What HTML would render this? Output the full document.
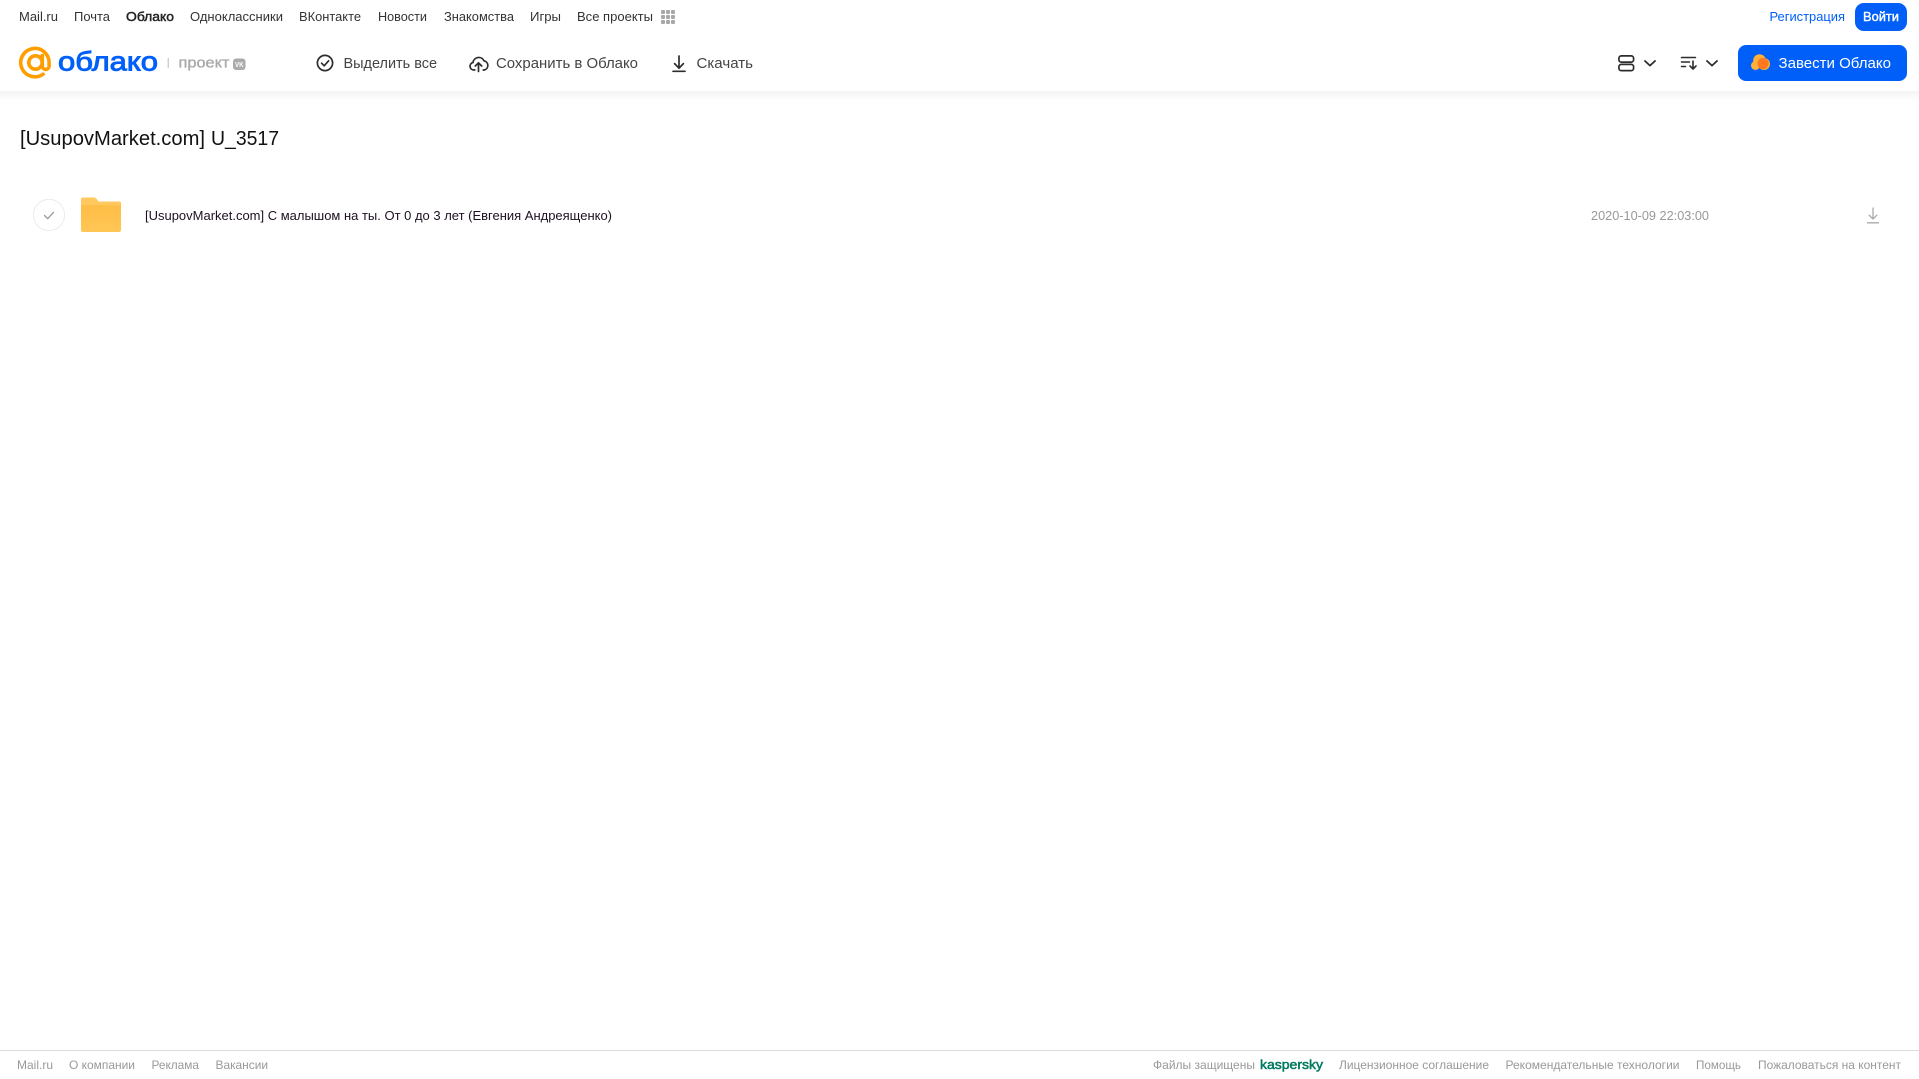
<!DOCTYPE html>
<html lang="ru">
<head>
<meta charset="utf-8">
<title>[UsupovMarket.com] U_3517</title>
<style>
html,body{margin:0;padding:0;background:#fff;width:1919px;height:1079px;overflow:hidden}
svg{display:block}
text{font-family:"Liberation Sans",Arial,sans-serif}
.nav{font-size:13px;fill:#333}
.tb{font-size:15px;fill:#444}
.ft{font-size:12px;fill:#999}
</style>
</head>
<body>
<svg width="1919" height="1079" viewBox="0 0 1919 1079" xmlns="http://www.w3.org/2000/svg">
<defs>
<linearGradient id="sh" x1="0" y1="0" x2="0" y2="1"><stop offset="0" stop-color="#f4f4f4"/><stop offset="1" stop-color="#fff"/></linearGradient>
<linearGradient id="fd" x1="0" y1="0" x2="0" y2="1"><stop offset="0" stop-color="#ffbb42"/><stop offset="1" stop-color="#ffc655"/></linearGradient>
</defs>
<rect x="0" y="91" width="1919" height="11" fill="url(#sh)"/>

<!-- top nav -->
<text class="nav" x="19" y="21" textLength="39" lengthAdjust="spacingAndGlyphs">Mail.ru</text>
<text class="nav" x="74" y="21" textLength="36" lengthAdjust="spacingAndGlyphs">Почта</text>
<text class="nav" x="126" y="21" textLength="48" lengthAdjust="spacingAndGlyphs" stroke="#222" stroke-width=".45" style="fill:#222">Облако</text>
<text class="nav" x="190" y="21" textLength="93" lengthAdjust="spacingAndGlyphs">Одноклассники</text>
<text class="nav" x="299" y="21" textLength="62" lengthAdjust="spacingAndGlyphs">ВКонтакте</text>
<text class="nav" x="378" y="21" textLength="49" lengthAdjust="spacingAndGlyphs">Новости</text>
<text class="nav" x="444" y="21" textLength="70" lengthAdjust="spacingAndGlyphs">Знакомства</text>
<text class="nav" x="530" y="21" textLength="31" lengthAdjust="spacingAndGlyphs">Игры</text>
<text class="nav" x="577" y="21" textLength="76" lengthAdjust="spacingAndGlyphs">Все проекты</text>
<g fill="#a8a8a8">
<rect x="661" y="10" width="4" height="4" rx="1"/><rect x="666" y="10" width="4" height="4" rx="1"/><rect x="671" y="10" width="4" height="4" rx="1"/>
<rect x="661" y="15" width="4" height="4" rx="1"/><rect x="666" y="15" width="4" height="4" rx="1"/><rect x="671" y="15" width="4" height="4" rx="1"/>
<rect x="661" y="20" width="4" height="4" rx="1"/><rect x="666" y="20" width="4" height="4" rx="1"/><rect x="671" y="20" width="4" height="4" rx="1"/>
</g>
<text class="nav" x="1769.500" y="21" textLength="75.500" lengthAdjust="spacingAndGlyphs" style="fill:#005ff9">Регистрация</text>
<rect x="1855" y="3" width="52" height="28" rx="9" fill="#005ff9"/>
<text x="1863" y="21" font-size="13" fill="#fff" stroke="#fff" stroke-width=".4" textLength="36" lengthAdjust="spacingAndGlyphs">Войти</text>

<!-- logo -->
<path d="M42.300 55.500V66a3.400 3.400 0 0 0 6.800 0V62.500a14.200 14.200 0 1 0-6 11.700" fill="none" stroke="#ff9e00" stroke-width="3.600" stroke-linecap="round"/>
<circle cx="35.500" cy="62.500" r="6.700" fill="none" stroke="#ff9e00" stroke-width="3.600"/>
<text x="58" y="70.500" font-size="27" fill="#005ff9" stroke="#005ff9" stroke-width=".9" textLength="100" lengthAdjust="spacingAndGlyphs">облако</text>
<rect x="167.700" y="58" width="1" height="10" fill="#b8b8b8"/>
<text x="178.500" y="67.500" font-size="15" fill="#a9a9a9" stroke="#a9a9a9" stroke-width=".35" textLength="51" lengthAdjust="spacingAndGlyphs">проект</text>
<rect x="233" y="58.500" width="12.500" height="11.500" rx="3" fill="#ababab"/>
<text x="235" y="67" font-size="7" font-weight="700" fill="#fff" textLength="8.500" lengthAdjust="spacingAndGlyphs">VK</text>

<!-- toolbar -->
<circle cx="325" cy="63" r="7.600" fill="none" stroke="#2c2d2e" stroke-width="1.700"/>
<path d="M321.600 63.200l2.600 2.600 4.400-5" fill="none" stroke="#2c2d2e" stroke-width="1.700" stroke-linecap="round" stroke-linejoin="round"/>
<text class="tb" x="343.500" y="68" textLength="93.500" lengthAdjust="spacingAndGlyphs">Выделить все</text>

<path d="M474.800 70h-1a3.800 3.800 0 0 1-.8-7.500 5.800 5.800 0 0 1 11-1.700 4.700 4.700 0 0 1 .2 9.200h-1" fill="none" stroke="#2c2d2e" stroke-width="1.700" stroke-linecap="round" stroke-linejoin="round"/>
<path d="M478.500 71.500v-8M475.300 66l3.200-3.200 3.200 3.200" fill="none" stroke="#2c2d2e" stroke-width="1.700" stroke-linecap="round" stroke-linejoin="round"/>
<text class="tb" x="496" y="68" textLength="142" lengthAdjust="spacingAndGlyphs">Сохранить в Облако</text>

<path d="M679 56v12M674.600 63.600l4.400 4.600 4.400-4.600M673 71.300h12" fill="none" stroke="#2c2d2e" stroke-width="1.700" stroke-linecap="round" stroke-linejoin="round"/>
<text class="tb" x="696.500" y="68" textLength="56.500" lengthAdjust="spacingAndGlyphs">Скачать</text>

<!-- right header -->
<rect x="1618.900" y="55.900" width="14.700" height="6.200" rx="2.400" fill="none" stroke="#2c2d2e" stroke-width="1.700"/>
<rect x="1618.900" y="64.400" width="14.700" height="6.200" rx="2.400" fill="none" stroke="#2c2d2e" stroke-width="1.700"/>
<path d="M1645 61l5 4.600 5-4.600" fill="none" stroke="#2c2d2e" stroke-width="1.800" stroke-linecap="round" stroke-linejoin="round"/>
<path d="M1681.500 57.500h14M1681.500 62h8M1681.500 66.500h4" fill="none" stroke="#2c2d2e" stroke-width="1.500" stroke-linecap="round"/>
<path d="M1693 61v8M1690 66l3 3 3-3" fill="none" stroke="#2c2d2e" stroke-width="1.600" stroke-linecap="round" stroke-linejoin="round"/>
<path d="M1707 61l5 4.600 5-4.600" fill="none" stroke="#2c2d2e" stroke-width="1.800" stroke-linecap="round" stroke-linejoin="round"/>

<rect x="1738" y="45" width="169" height="36" rx="8" fill="#005ff9"/>
<g fill="#ffb03a"><circle cx="1759.500" cy="60.500" r="6.300"/><circle cx="1755.500" cy="65.500" r="4.500"/><circle cx="1764" cy="64" r="6"/></g>
<circle cx="1763" cy="63.500" r="5.600" fill="#ff7a1f"/>
<text x="1778.500" y="68" font-size="15" fill="#fff" textLength="112.500" lengthAdjust="spacingAndGlyphs">Завести Облако</text>

<!-- title -->
<text x="20" y="145" font-size="20" fill="#111" textLength="185" lengthAdjust="spacingAndGlyphs">[UsupovMarket.com]</text>
<text x="211" y="145" font-size="20" fill="#111" textLength="68" lengthAdjust="spacingAndGlyphs">U_3517</text>

<!-- row -->
<circle cx="49" cy="215" r="15.600" fill="#fff" stroke="#ececec" stroke-width="1"/>
<path d="M44.500 215.500l3.200 3.200 5.800-6.400" fill="none" stroke="#999" stroke-width="1.300" stroke-linecap="round" stroke-linejoin="round"/>
<path d="M83 197.500h10.500c1.500 0 2.500.7 3.300 1.800l1.500 2.200H119a2 2 0 0 1 2 2V230a2 2 0 0 1-2 2H83a2 2 0 0 1-2-2V199.500a2 2 0 0 1 2-2z" fill="url(#fd)"/>
<path d="M83 197.500h10.500c1.500 0 2.500.7 3.300 1.800l1.500 2.200H119a2 2 0 0 1 2 2V205H81v-5.500a2 2 0 0 1 2-2z" fill="#ffc95f"/>
<text x="145" y="220" font-size="13" fill="#1c1022" textLength="467" lengthAdjust="spacingAndGlyphs">[UsupovMarket.com] С малышом на ты. От 0 до 3 лет (Евгения Андреященко)</text>
<text x="1591" y="220" font-size="13" fill="#999" textLength="118" lengthAdjust="spacingAndGlyphs">2020-10-09 22:03:00</text>
<path d="M1873 207.500v11.500M1868.800 214.800l4.200 4.200 4.200-4.200M1867 222.800h12" fill="none" stroke="#aaa" stroke-width="1.300" stroke-linejoin="round"/>

<!-- footer -->
<rect x="0" y="1050" width="1919" height="1" fill="#dcdcdc"/>
<text class="ft" x="17" y="1069" textLength="36" lengthAdjust="spacingAndGlyphs">Mail.ru</text>
<text class="ft" x="69" y="1069" textLength="66" lengthAdjust="spacingAndGlyphs">О компании</text>
<text class="ft" x="151.500" y="1069" textLength="47.500" lengthAdjust="spacingAndGlyphs">Реклама</text>
<text class="ft" x="215.500" y="1069" textLength="52.500" lengthAdjust="spacingAndGlyphs">Вакансии</text>
<text class="ft" x="1153" y="1069" textLength="102" lengthAdjust="spacingAndGlyphs">Файлы защищены</text>
<text x="1260" y="1069" font-size="13" fill="#00795f" stroke="#00795f" stroke-width=".5" textLength="63" lengthAdjust="spacingAndGlyphs">kaspersky</text>
<text class="ft" x="1339" y="1069" textLength="150" lengthAdjust="spacingAndGlyphs">Лицензионное соглашение</text>
<text class="ft" x="1505.500" y="1069" textLength="174" lengthAdjust="spacingAndGlyphs">Рекомендательные технологии</text>
<text class="ft" x="1696" y="1069" textLength="45" lengthAdjust="spacingAndGlyphs">Помощь</text>
<text class="ft" x="1758" y="1069" textLength="143" lengthAdjust="spacingAndGlyphs">Пожаловаться на контент</text>
</svg>
</body>
</html>
